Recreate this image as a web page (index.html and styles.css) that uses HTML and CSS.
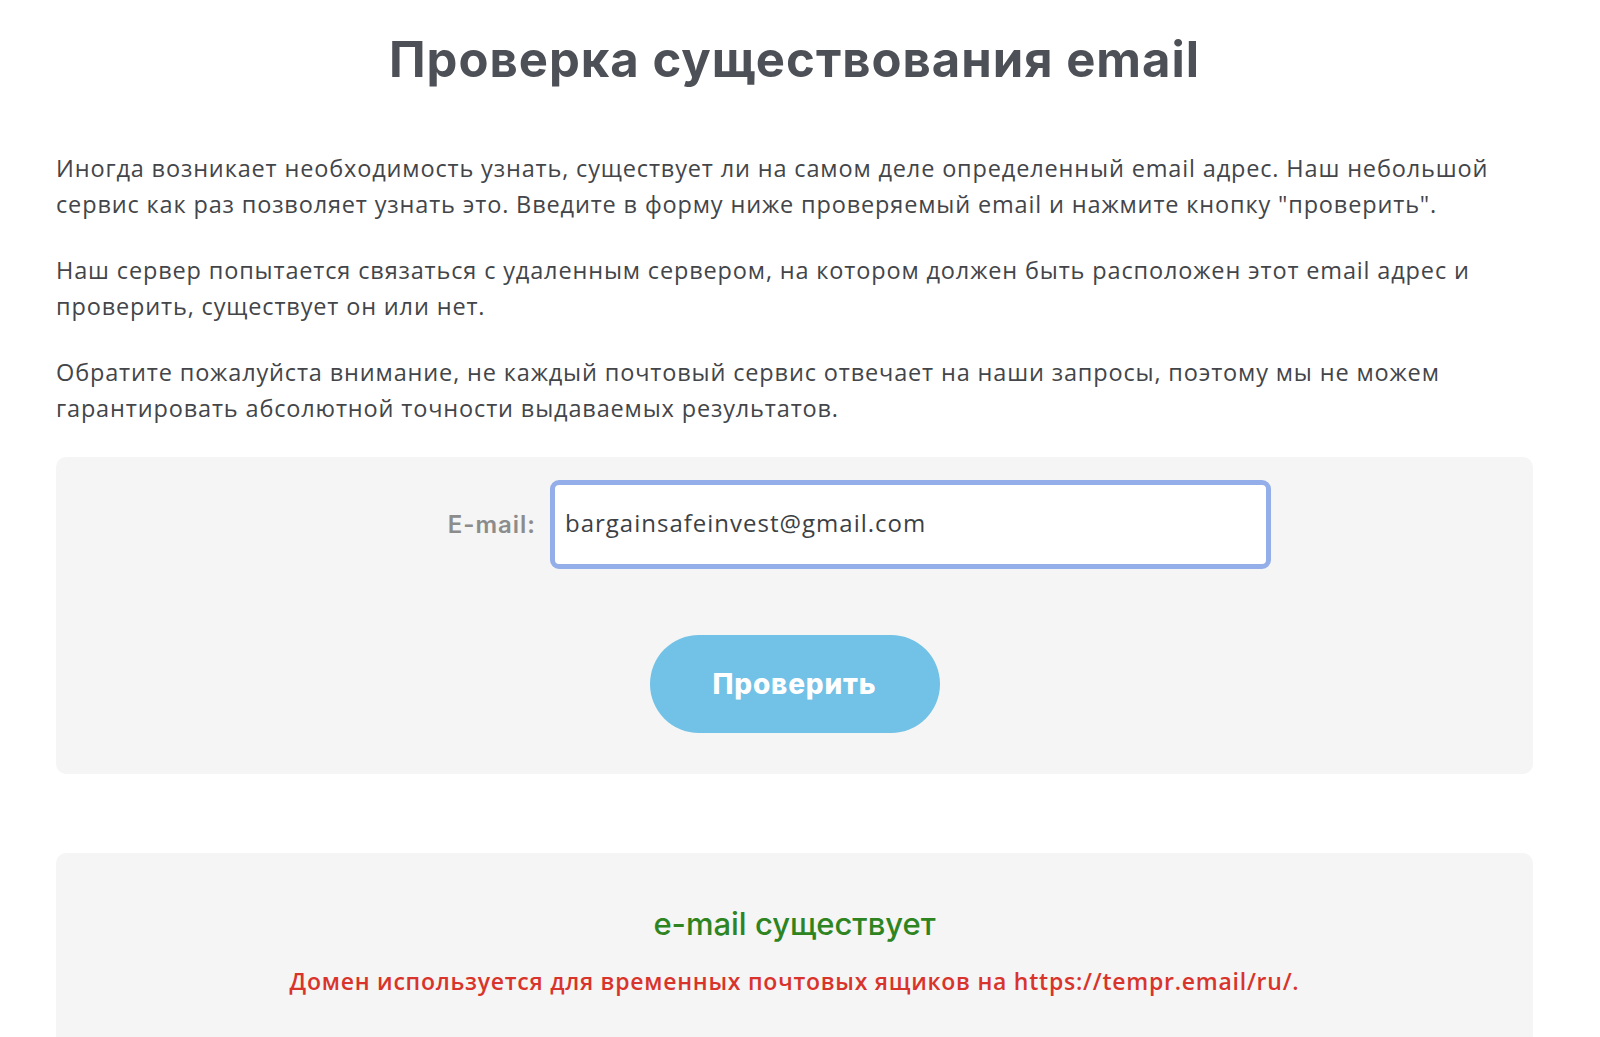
FILE: index.html
```html
<!DOCTYPE html>
<html lang="ru">
<head>
    <meta charset="UTF-8">
    <meta name="viewport" content="width=device-width, initial-scale=1.0">
    <title>Проверка существования email</title>
    <link rel="stylesheet" href="styles.css">
</head>
<body>
    <div class="container">
        <h1>Проверка существования email</h1>

        <p>Иногда возникает необходимость узнать, существует ли на самом деле определенный email адрес. Наш небольшой сервис как раз позволяет узнать это. Введите в форму ниже проверяемый email и нажмите кнопку "проверить".</p>
        <p>Наш сервер попытается связаться с удаленным сервером, на котором должен быть расположен этот email адрес и проверить, существует он или нет.</p>
        <p>Обратите пожалуйста внимание, не каждый почтовый сервис отвечает на наши запросы, поэтому мы не можем гарантировать абсолютной точности выдаваемых результатов.</p>

        <form class="check-form" onsubmit="return false;">
            <div class="form-row">
                <label for="email">E-mail:</label>
                <input type="text" id="email" value="bargainsafeinvest@gmail.com">
            </div>
            <button type="submit" class="check-button">Проверить</button>
        </form>

        <div class="result">
            <div class="result-ok">e-mail существует</div>
            <div class="result-warn">Домен используется для временных почтовых ящиков на https://tempr.email/ru/.</div>
        </div>
    </div>
</body>
</html>
```

FILE: styles.css
```css
body {
    margin: 0;
    background: #ffffff;
    font-family: "Open Sans", Arial, sans-serif;
    color: #434549;
}
.container {
    width: 1477px;
    margin: 0 0 0 56px;
}
h1 {
    margin: 0;
    padding-top: 30px;
    height: 151px;
    box-sizing: border-box;
    text-align: center;
    font-family: Inter, "Open Sans", sans-serif;
    font-size: 49px;
    font-weight: 700;
    color: #4d5157;
    letter-spacing: 1px;
}
p {
    margin: 0 0 31px;
    font-size: 23.5px;
    line-height: 35.5px;
    letter-spacing: 0.85px;
}
.check-form {
    background: #f4f5f4;
    border-radius: 10px;
    padding: 23px 0 41px;
    margin-top: 16px;
    display: flex;
    flex-direction: column;
    align-items: center;
}
.form-row {
    display: flex;
    align-items: center;
    width: 100%;
}
.form-row label {
    width: 480px;
    text-align: right;
    font-family: Inter, sans-serif;
    font-size: 24px;
    font-weight: 600;
    color: #8c8c8c;
    margin-right: 14px;
    letter-spacing: 1px;
}
.form-row input {
    width: 721px;
    height: 89px;
    box-sizing: border-box;
    border: 5px solid #93aee8;
    border-radius: 9px;
    padding: 0 10px 4px;
    font-family: "Open Sans", sans-serif;
    font-size: 24px;
    letter-spacing: 1px;
    color: #3d3f44;
    background: #fff;
    outline: none;
}
.check-button {
    margin-top: 66px;
    width: 290px;
    height: 98px;
    border: none;
    border-radius: 49px;
    background: #72c1e6;
    color: #fff;
    font-family: Inter, sans-serif;
    font-size: 28px;
    font-weight: 800;
    letter-spacing: 0.8px;
    cursor: pointer;
}
.result {
    margin-top: 79px;
    background: #f4f5f4;
    border-radius: 10px 10px 0 0;
    padding: 52px 0 40px;
    text-align: center;
}
.result-ok {
    font-family: Inter, sans-serif;
    font-size: 31px;
    font-weight: 500;
    color: #2f8422;
}
.result-warn {
    margin-top: 23px;
    font-size: 23px;
    font-weight: 600;
    letter-spacing: 0.75px;
    color: #d8342b;
}
```
